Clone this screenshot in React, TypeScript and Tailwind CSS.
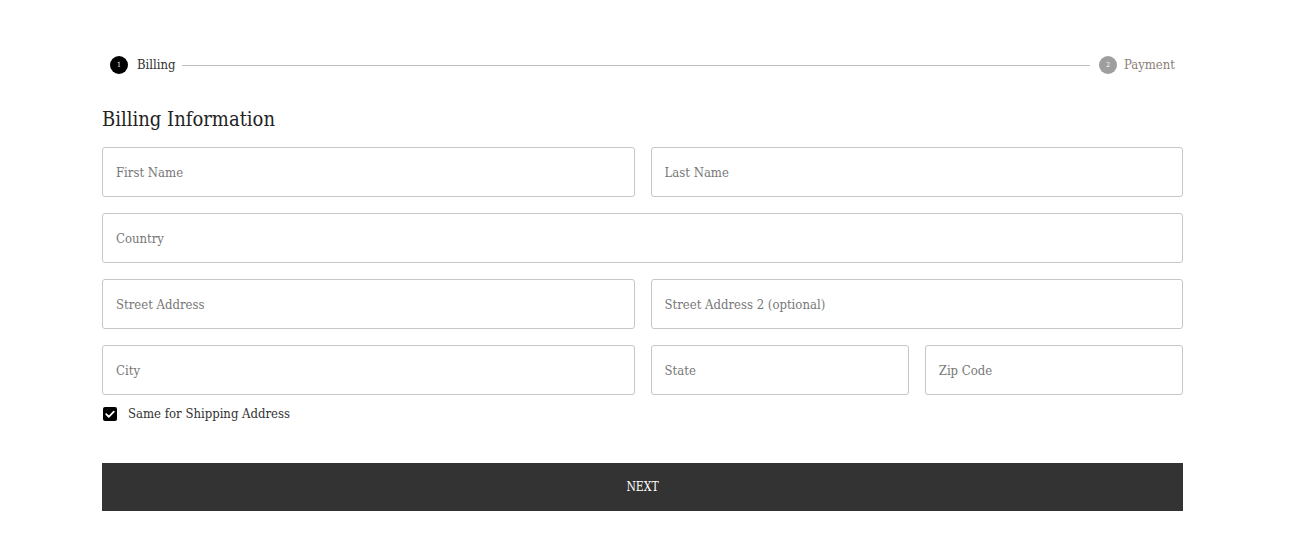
import React, { useState } from 'react';

const font = { fontFamily: '"DejaVu Serif Condensed", "DejaVu Serif", serif' };

function Field({ placeholder, className = '' }: { placeholder: string; className?: string }) {
  return (
    <input
      type="text"
      placeholder={placeholder}
      className={`h-[50px] w-full rounded-[3px] border border-[#c6c6c6] bg-white px-[13px] text-[13px] text-[#333] placeholder-[#777] focus:outline-none ${className}`}
    />
  );
}

export default function App() {
  const [same, setSame] = useState(true);

  return (
    <div className="min-h-screen bg-white" style={font}>
      <div className="ml-[102px] w-[1081px] pt-[56px]">
        {/* Stepper */}
        <div className="flex h-[18px] items-center pl-2 pr-2">
          <span className="flex h-[18px] w-[18px] items-center justify-center rounded-full bg-black text-[7px] text-white">1</span>
          <span className="ml-[9px] text-[13px] text-[#333]">Billing</span>
          <div className="ml-[6px] mr-[9px] h-px flex-1 bg-[#bdbdbd]" />
          <span className="flex h-[18px] w-[18px] items-center justify-center rounded-full bg-[#9e9e9e] text-[7px] text-white">2</span>
          <span className="ml-[7px] text-[13px] text-[#8b8178]">Payment</span>
        </div>

        <h1 className="mt-[32px] text-[20px] leading-[26px] text-[#222]">Billing Information</h1>

        <form className="mt-[15px] grid grid-cols-4 gap-4">
          <Field placeholder="First Name" className="col-span-2" />
          <Field placeholder="Last Name" className="col-span-2" />
          <Field placeholder="Country" className="col-span-4" />
          <Field placeholder="Street Address" className="col-span-2" />
          <Field placeholder="Street Address 2 (optional)" className="col-span-2" />
          <Field placeholder="City" className="col-span-2" />
          <Field placeholder="State" />
          <Field placeholder="Zip Code" />
        </form>

        <label className="mt-[9px] flex cursor-pointer items-center gap-[11px] pl-px">
          <span
            onClick={() => setSame(!same)}
            className={`flex h-[14px] w-[14px] items-center justify-center rounded-[2px] ${same ? 'bg-black' : 'border border-[#999] bg-white'}`}
          >
            {same && (
              <svg viewBox="0 0 14 14" className="h-[14px] w-[14px]">
                <path d="M3.2 7.2 L5.8 9.8 L10.8 4.6" fill="none" stroke="white" strokeWidth="1.8" strokeLinecap="round" strokeLinejoin="round" />
              </svg>
            )}
          </span>
          <span className="text-[13px] text-[#333]">Same for Shipping Address</span>
        </label>

        <button
          type="button"
          className="mt-[39px] flex h-[48px] w-full items-center justify-center bg-[#333333] text-[12px] text-white"
        >
          NEXT
        </button>
      </div>
    </div>
  );
}
